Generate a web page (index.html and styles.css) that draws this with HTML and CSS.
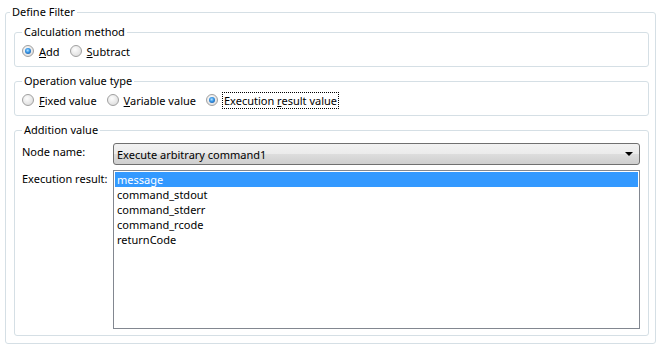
FILE: index.html
```html
<!DOCTYPE html>
<html lang="en">
<head>
    <meta charset="UTF-8">
    <title>Define Filter</title>
    <link rel="stylesheet" href="styles.css">
</head>
<body>
    <fieldset class="group outer">
        <legend>Define Filter</legend>

        <fieldset class="group">
            <legend>Calculation method</legend>
            <div class="radio-row">
                <label class="radio"><span class="dot checked"></span><span><u>A</u>dd</span></label>
                <label class="radio"><span class="dot"></span><span><u>S</u>ubtract</span></label>
            </div>
        </fieldset>

        <fieldset class="group">
            <legend>Operation value type</legend>
            <div class="radio-row">
                <label class="radio"><span class="dot"></span><span><u>F</u>ixed value</span></label>
                <label class="radio"><span class="dot"></span><span><u>V</u>ariable value</span></label>
                <label class="radio"><span class="dot checked"></span><span class="focus">Execution <u>r</u>esult value</span></label>
            </div>
        </fieldset>

        <fieldset class="group addition">
            <legend>Addition value</legend>
            <div class="form-row">
                <span class="field-label">Node name:</span>
                <div class="combo">
                    <span>Execute arbitrary command1</span>
                    <span class="arrow"></span>
                </div>
            </div>
            <div class="form-row">
                <span class="field-label">Execution result:</span>
                <ul class="listbox">
                    <li class="selected">message</li>
                    <li>command_stdout</li>
                    <li>command_stderr</li>
                    <li>command_rcode</li>
                    <li>returnCode</li>
                </ul>
            </div>
        </fieldset>
    </fieldset>
</body>
</html>
```

FILE: styles.css
```css
body {
    margin: 0;
    padding: 4px 6px 0 5px;
    background-color: #fff;
    font-family: "Noto Sans", "DejaVu Sans", sans-serif;
    font-size: 11px;
    line-height: 15px;
    color: #000;
}
.group {
    margin: 0;
    padding: 2px 7px 6px 7px;
    border: 1px solid #d5dfe5;
    border-radius: 3px;
    min-width: 0;
}
.group legend {
    padding: 0 2px;
    margin-left: 0;
    line-height: 16px;
}
.outer {
    padding: 4px 6px 7px 8px;
}
.outer > legend {
    margin-left: -4px;
}
.outer > .group {
    margin-bottom: 6px;
}
.outer > .group:last-child {
    margin-bottom: 0;
}
.radio-row {
    display: flex;
    align-items: center;
    height: 18px;
}
.radio {
    display: flex;
    align-items: center;
    margin-right: 10px;
}
.dot {
    width: 12px;
    height: 12px;
    box-sizing: border-box;
    border-radius: 50%;
    border: 1px solid #a0a0a0;
    background: radial-gradient(circle at 40% 35%, #fdfdfd 0%, #e8e8e8 55%, #d6d6d6 100%);
    margin-right: 5px;
    position: relative;
}
.dot.checked::after {
    content: "";
    position: absolute;
    left: 2px;
    top: 2px;
    width: 6px;
    height: 6px;
    border-radius: 50%;
    background: radial-gradient(circle at 45% 40%, #b9e2ff 0%, #3a9ae8 40%, #1d5fae 80%, #174a86 100%);
}
.focus {
    outline: 1px dotted #000;
    outline-offset: 0;
    padding: 0 1px;
}
.addition {
    padding-top: 5px;
    padding-right: 8px;
    padding-left: 7px;
}
.form-row {
    display: flex;
    align-items: flex-start;
}
.form-row + .form-row {
    margin-top: 5px;
}
.field-label {
    width: 91px;
    flex-shrink: 0;
    padding-top: 1px;
    white-space: nowrap;
}
.form-row:first-child .field-label {
    padding-top: 3px;
}
.combo {
    flex: 1;
    height: 22px;
    box-sizing: border-box;
    border: 1px solid #707070;
    border-radius: 3px;
    background: linear-gradient(#f2f2f2 0%, #ebebeb 50%, #dddddd 50%, #cfcfcf 100%);
    display: flex;
    align-items: center;
    justify-content: space-between;
    padding: 0 6px 0 3px;
}
.arrow {
    width: 0;
    height: 0;
    border-left: 4px solid transparent;
    border-right: 4px solid transparent;
    border-top: 4px solid #000;
}
.listbox {
    flex: 1;
    margin: 0;
    padding: 1px;
    list-style: none;
    height: 159px;
    box-sizing: border-box;
    border: 1px solid #828790;
}
.listbox li {
    padding-left: 2px;
    line-height: 15px;
}
.listbox .selected {
    background-color: #3399ff;
    color: #fff;
}
```
